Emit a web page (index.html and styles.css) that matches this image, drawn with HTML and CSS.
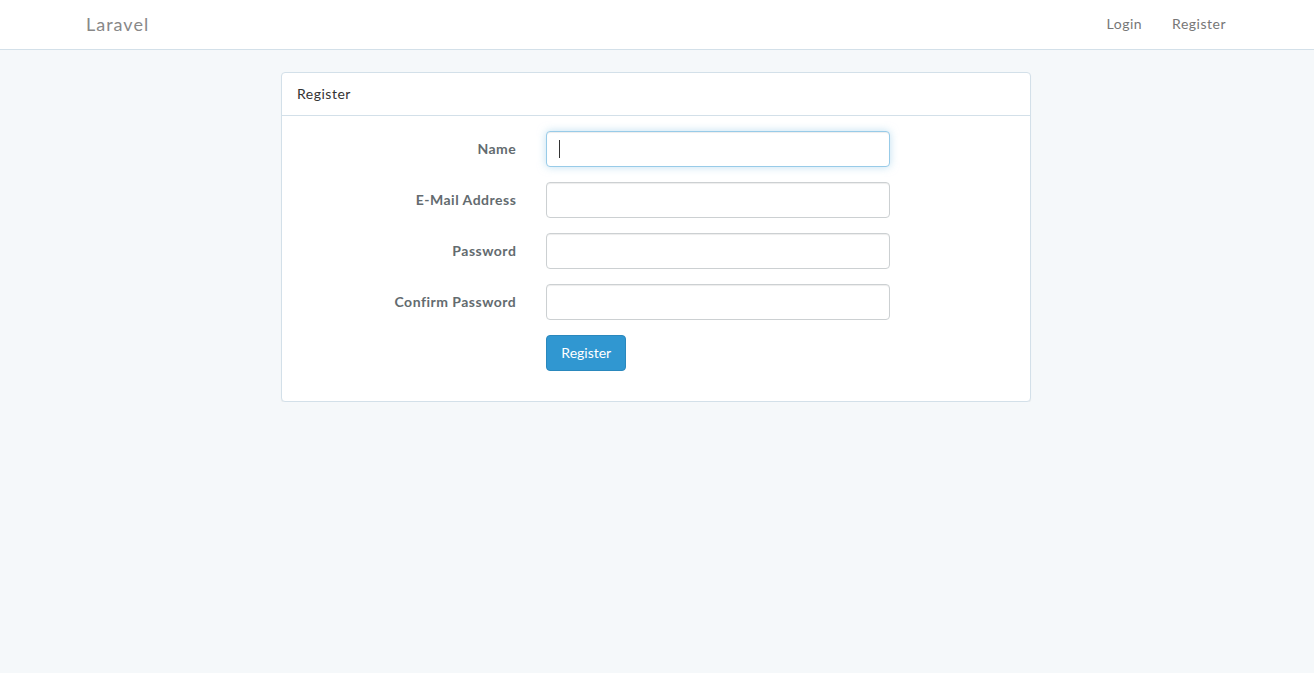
FILE: index.html
```html
<!DOCTYPE html>
<html lang="en">
<head>
    <meta charset="UTF-8">
    <meta name="viewport" content="width=device-width, initial-scale=1.0">
    <title>Laravel</title>
    <link rel="stylesheet" href="styles.css">
</head>
<body>
    <nav class="navbar">
        <div class="container nav-inner">
            <a class="brand" href="#">Laravel</a>
            <ul class="nav-right">
                <li><a href="#">Login</a></li>
                <li><a href="#">Register</a></li>
            </ul>
        </div>
    </nav>

    <div class="container">
        <div class="panel">
            <div class="panel-heading">Register</div>
            <div class="panel-body">
                <form class="form">
                    <div class="form-group">
                        <label class="control-label" for="name">Name</label>
                        <div class="field">
                            <input id="name" type="text" class="form-control is-focused">
                            <span class="caret"></span>
                        </div>
                    </div>
                    <div class="form-group">
                        <label class="control-label" for="email">E-Mail Address</label>
                        <div class="field">
                            <input id="email" type="email" class="form-control">
                        </div>
                    </div>
                    <div class="form-group">
                        <label class="control-label" for="password">Password</label>
                        <div class="field">
                            <input id="password" type="password" class="form-control">
                        </div>
                    </div>
                    <div class="form-group">
                        <label class="control-label" for="password-confirm">Confirm Password</label>
                        <div class="field">
                            <input id="password-confirm" type="password" class="form-control">
                        </div>
                    </div>
                    <div class="form-group">
                        <span class="control-label"></span>
                        <div class="field">
                            <button type="button" class="btn-primary">Register</button>
                        </div>
                    </div>
                </form>
            </div>
        </div>
    </div>
</body>
</html>
```

FILE: styles.css
```css
*{
    margin: 0;
    padding: 0;
    box-sizing: border-box;
}
body{
    background-color: #f5f8fa;
    font-family: "Lato", "Open Sans", sans-serif;
    font-size: 14px;
    line-height: 1.6;
    letter-spacing: 0.5px;
    color: #636b6f;
}
a{
    text-decoration: none;
}
.container{
    width: 1170px;
    margin: 0 auto;
    padding: 0 15px;
    position: relative;
    left: -1px;
}
.navbar{
    background-color: #fff;
    border-bottom: 1px solid #d3e0e9;
    height: 50px;
    margin-bottom: 22px;
}
.nav-inner{
    display: flex;
    justify-content: space-between;
    align-items: center;
    height: 49px;
}
.brand{
    font-size: 18px;
    letter-spacing: 1px;
    color: #888;
    line-height: 22px;
    margin-top: -2px;
}
.nav-right{
    list-style: none;
    display: flex;
    margin-right: -15px;
}
.nav-right a{
    display: block;
    padding: 13px 15px 15px;
    line-height: 22px;
    color: #777;
}
.panel{
    width: 750px;
    margin: 0 auto;
    background-color: #fff;
    border: 1px solid #d3e0e9;
    border-radius: 4px;
    box-shadow: 0 1px 1px rgba(0, 0, 0, 0.05);
}
.panel-heading{
    padding: 10px 15px;
    border-bottom: 1px solid #d3e0e9;
    color: #333;
    line-height: 22px;
}
.panel-body{
    padding: 15px 0;
}
.form-group{
    display: flex;
    margin-bottom: 15px;
}
.control-label{
    width: 249.33px;
    padding: 7px 15px 0;
    text-align: right;
    font-weight: bold;
    line-height: 22px;
}
.field{
    width: 374px;
    padding: 0 15px;
    position: relative;
}
.form-control{
    display: block;
    width: 100%;
    height: 36px;
    padding: 6px 12px;
    font: inherit;
    color: #555;
    background-color: #fff;
    border: 1px solid #ccd0d2;
    border-radius: 4px;
    box-shadow: inset 0 1px 1px rgba(0, 0, 0, 0.075);
    outline: none;
}
.form-control.is-focused,
.form-control:focus{
    border-color: #98cbe8;
    box-shadow: inset 0 1px 1px rgba(0, 0, 0, 0.075), 0 0 8px rgba(152, 203, 232, 0.6);
}
.caret{
    position: absolute;
    left: 28px;
    top: 9px;
    width: 1px;
    height: 18px;
    background-color: #333;
}
.btn-primary{
    display: inline-block;
    height: 36px;
    padding: 6px 14px;
    font: inherit;
    line-height: 22px;
    color: #fff;
    background-color: #3097d1;
    border: 1px solid #2a88bd;
    border-radius: 4px;
    cursor: pointer;
}
```
